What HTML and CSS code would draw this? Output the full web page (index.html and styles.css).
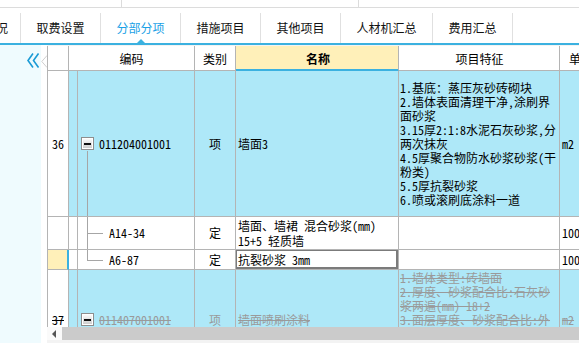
FILE: index.html
```html
<!DOCTYPE html>
<html lang="zh-CN">
<head>
<meta charset="utf-8">
<title>分部分项</title>
<link rel="stylesheet" href="styles.css">
</head>
<body>
<div class="app">
  <div class="topbar"><span class="seg s1"></span><span class="seg s2"></span></div>
  <nav class="tabs">
    <div class="tab first">工程概况</div>
    <div class="tab">取费设置</div>
    <div class="tab active">分部分项</div>
    <div class="tab">措施项目</div>
    <div class="tab">其他项目</div>
    <div class="tab wide">人材机汇总</div>
    <div class="tab">费用汇总</div>
  </nav>
  <div class="main">
    <aside class="side">
      <svg class="collapse" width="12" height="15" viewBox="0 0 12 15"><polyline points="6,0.5 1,7.5 6,14.5" /><polyline points="11.5,0.5 6.5,7.5 11.5,14.5" /></svg>
    </aside>
    <div class="gutter">
      <svg class="notch" width="6" height="13" viewBox="0 0 6 13"><polyline points="6,0.5 0.8,6.5 6,12.5" /></svg>
    </div>
    <section class="sheet">
      <div class="viewport">
        <div class="row head">
          <div class="c rn"></div>
          <div class="c hcode">编码</div>
          <div class="c type">类别</div>
          <div class="c name hl">名称</div>
          <div class="c feat center">项目特征</div>
          <div class="c unit center">单位</div>
        </div>

        <div class="row r36 item">
          <div class="c rn">36</div>
          <div class="c nar"></div>
          <div class="c code parent"><span class="box"></span><span class="ctext">011204001001</span></div>
          <div class="c type">项</div>
          <div class="c name">墙面3</div>
          <div class="c feat">1.基底：蒸压灰砂砖砌块<br>2.墙体表面清理干净,涂刷界<br>面砂浆<br>3.15厚2:1:8水泥石灰砂浆,分<br>两次抹灰<br>4.5厚聚合物防水砂浆砂浆(干<br>粉类)<br>5.5厚抗裂砂浆<br>6.喷或滚刷底涂料一道</div>
          <div class="c unit">m2</div>
        </div>

        <div class="row r14">
          <div class="c rn"></div>
          <div class="c nar"></div>
          <div class="c code child mid"><span class="ctext">A14-34</span></div>
          <div class="c type">定</div>
          <div class="c name two">墙面、墙裙 混合砂浆(mm)<br>15+5 轻质墙</div>
          <div class="c feat"></div>
          <div class="c unit">100m2</div>
        </div>

        <div class="row r6">
          <div class="c rn cur"></div>
          <div class="c nar"></div>
          <div class="c code child last"><span class="ctext">A6-87</span></div>
          <div class="c type">定</div>
          <div class="c name editing">抗裂砂浆 3mm</div>
          <div class="c feat"></div>
          <div class="c unit">100m2</div>
        </div>

        <div class="row r37 item off">
          <div class="c rn strike">37</div>
          <div class="c nar"></div>
          <div class="c code parent"><span class="box"></span><span class="ctext strike">011407001001</span></div>
          <div class="c type">项</div>
          <div class="c name strike">墙面喷刷涂料</div>
          <div class="c feat strike">1.墙体类型:砖墙面<br>2.厚度、砂浆配合比:石灰砂<br>浆两遍(mm) 18+2<br>3.面层厚度、砂浆配合比:外<br>墙涂料<br>4.刮腻子要求:满刮两遍<br>5.涂料品种:乳胶漆</div>
          <div class="c unit strike">m2</div>
        </div>
      </div>
      <div class="hscroll">
        <div class="sbtn"><span class="tri"></span></div>
        <div class="thumb"></div>
      </div>
    </section>
  </div>
</div>
</body>
</html>
```

FILE: styles.css
```css
* { box-sizing: border-box; }
html, body { margin: 0; padding: 0; }
body {
  width: 579px;
  height: 343px;
  overflow: hidden;
  background: #fff;
  font-family: "Noto Sans CJK SC", "Noto Sans", sans-serif;
  color: #000;
}
.app { width: 579px; height: 343px; display: flex; flex-direction: column; overflow: hidden; }

/* top strip */
.topbar { height: 8px; display: flex; border-bottom: 1px solid #dcdcdc; flex: none; }
.seg { height: 7px; border-right: 1px solid #dcdcdc; }
.s1 { width: 122px; }
.s2 { width: 237px; }

/* tabs */
.tabs {
  height: 37px;
  flex: none;
  display: flex;
  padding-top: 5px;
  border-bottom: 2px solid #3bb1e0;
  font-size: 12px;
}
.tab {
  position: relative;
  width: 80px;
  height: 30px;
  line-height: 30px;
  text-align: center;
  border-right: 1px solid #e0e0e0;
  flex: none;
  color: #111;
}
.tab.first { width: 81px; margin-left: -60px; text-align: right; padding-right: 12px; }
.tab.wide { width: 92px; }
.tab.active { color: #1aa1e6; }
.tab.active::after {
  content: "";
  position: absolute;
  left: 36px;
  bottom: 0;
  border-left: 4px solid transparent;
  border-right: 4px solid transparent;
  border-bottom: 4px solid #3bb1e0;
}

/* main */
.main { flex: 1; display: flex; min-height: 0; }
.side { width: 41px; flex: none; background: #effbfe; padding-top: 8px; padding-left: 27px; }
.collapse { display: block; fill: none; stroke: #1b9bd5; stroke-width: 1.6; }
.gutter { width: 6px; flex: none; background: #fff; padding-top: 10px; }
.notch { display: block; fill: #fff; stroke: #cfcfcf; stroke-width: 1; }

.sheet { flex: 1; min-width: 0; display: flex; flex-direction: column; padding-top: 1px; padding-bottom: 3px; background: #f3f3f3; }
.viewport {
  height: 281px;
  flex: none;
  overflow: hidden;
  background: #fff;
  border-left: 1px solid #b4b4b4;
  font-family: "Noto Sans Mono CJK SC", "Noto Sans CJK SC", monospace;
  font-size: 12px;
}

.row {
  display: grid;
  grid-template-columns: 21px 9px 117px 41px 163px 161px 80px;
  width: 592px;
}
.row.head { grid-template-columns: 21px 126px 41px 163px 161px 80px; height: 25px; }
.c {
  border-right: 1px solid #b4b4b4;
  border-bottom: 1px solid #b4b4b4;
  display: flex;
  align-items: center;
  line-height: 14px;
  white-space: nowrap;
  overflow: hidden;
}
.head .c { justify-content: center; background: #fff; padding-top: 2px; }
.head .name.hl { background: #fff0b9; font-weight: bold; border-bottom-color: #3bb1e0; box-shadow: inset 0 -1px 0 #3bb1e0; }
.head .unit { justify-content: flex-start; padding-left: 9px; }

.rn { justify-content: center; background: #fff; }
.rn.cur { background: #fff0b9; border-right: 2px solid #3bb1e0; }
.type { justify-content: center; }
.name { padding-left: 2px; }
.feat { padding-left: 1px; }
.unit { padding-left: 2px; }

.item .c { background: #aee8f8; }
.item .rn { background: #fff; }

.r36 { height: 146px; }
.r14 { height: 33px; }
.r6 { height: 20px; }
.r37 { height: 100px; }
.name.two { line-height: 15px; }

.code { position: relative; padding-left: 3px; }
.box {
  width: 13px;
  height: 13px;
  flex: none;
  border: 1px solid #8e8e8e;
  background: linear-gradient(#ffffff, #c9c9c9);
  box-shadow: inset 0 0 0 1px #fff;
  position: relative;
  margin-right: 5px;
}
.box::after {
  content: "";
  position: absolute;
  left: 2px;
  top: 5px;
  width: 7px;
  height: 2px;
  background: #111;
}
.code.parent::before {
  content: "";
  position: absolute;
  left: 9px;
  top: calc(50% + 7px);
  bottom: 0;
  width: 1px;
  background: #a6a6a6;
}
.code.child { padding-left: 31px; }
.code.child::before {
  content: "";
  position: absolute;
  left: 9px;
  top: 0;
  bottom: 0;
  width: 1px;
  background: #a6a6a6;
}
.code.child.last::before { bottom: auto; height: 50%; }
.code.child::after {
  content: "";
  position: absolute;
  left: 9px;
  top: 50%;
  width: 16px;
  height: 1px;
  background: #a6a6a6;
}

.name.editing { position: relative; }
.name.editing::after {
  content: "";
  position: absolute;
  left: -1px;
  top: -1px;
  right: 0;
  bottom: 0;
  border: 2px solid #7b7b7b;
}

.off .c { color: #9a9a9a; }
.off .rn { color: #000; }
.strike { text-decoration: line-through; }

/* horizontal scrollbar */
.hscroll { height: 13px; flex: none; display: flex; background: #e6e6e6; }
.sbtn { width: 15px; flex: none; background: #fafafa; display: flex; align-items: center; padding-left: 5px; }
.tri { width: 0; height: 0; border-top: 4px solid transparent; border-bottom: 4px solid transparent; border-right: 4px solid #555; }
.thumb { flex: 1; background: #cbcbcb; }
```
